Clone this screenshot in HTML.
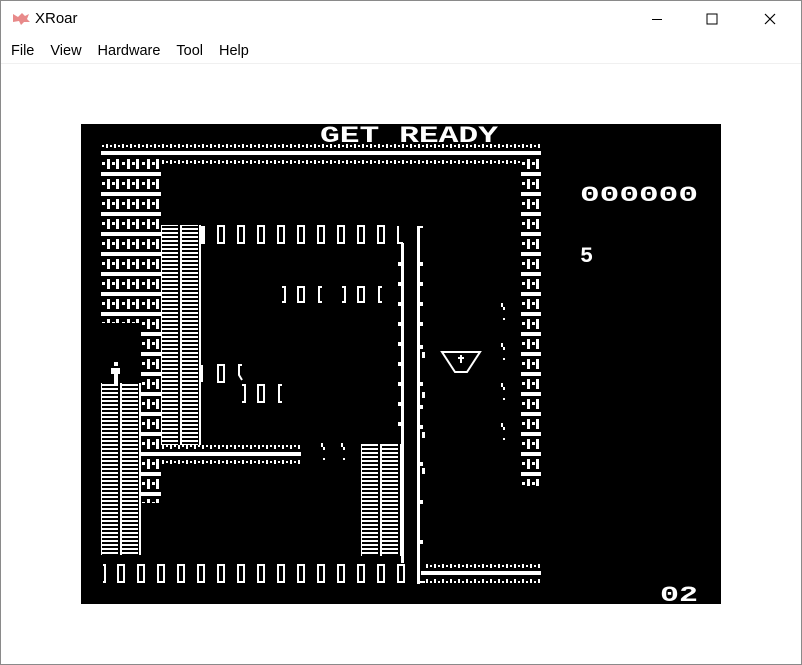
<!DOCTYPE html>
<html><head><meta charset="utf-8"><style>
html,body{margin:0;padding:0;background:#fff;width:802px;height:665px;overflow:hidden;font-family:"Liberation Sans",sans-serif}
.win{position:absolute;left:0;top:0;width:800px;height:663px;border:1px solid #8a8a8a;background:#fff}
.title{position:absolute;left:34px;top:9px;font-size:15px;color:#000}
.menu{position:absolute;top:42px;left:10px;font-size:14.5px;color:#000}
.menu span{margin-right:16px}
.sep{position:absolute;left:0;top:62px;width:800px;height:1px;background:#f0f0f0}
svg{position:absolute;left:0;top:0}
</style></head><body>
<div class="win">
<div class="title">XRoar</div>
<div class="menu"><span>File</span><span>View</span><span>Hardware</span><span>Tool</span><span>Help</span></div>
<div class="sep"></div>
</div>
<svg width="802" height="665" viewBox="0 0 802 665">
<defs>
<pattern id="wall" patternUnits="userSpaceOnUse" x="101" y="172" width="20" height="20">
<rect x="0" y="0" width="20" height="4" fill="#fff"/>
<rect x="1" y="10" width="3" height="3" fill="#fff"/>
<rect x="6" y="7" width="3" height="10" fill="#fff"/>
<rect x="11" y="10" width="3" height="3" fill="#fff"/>
<rect x="15" y="7" width="3" height="10" fill="#fff"/>
</pattern>
<pattern id="wallr" patternUnits="userSpaceOnUse" x="521" y="172" width="20" height="20">
<rect x="0" y="0" width="20" height="4" fill="#fff"/>
<rect x="1" y="10" width="3" height="3" fill="#fff"/>
<rect x="6" y="7" width="3" height="10" fill="#fff"/>
<rect x="11" y="10" width="3" height="3" fill="#fff"/>
<rect x="15" y="7" width="3" height="10" fill="#fff"/>
</pattern>
<pattern id="dots" patternUnits="userSpaceOnUse" x="101" y="0" width="8" height="4">
<rect x="1" y="1" width="2" height="2" fill="#fff"/><rect x="5" y="0" width="2" height="4" fill="#fff"/>
</pattern>
<pattern id="rungs" patternUnits="userSpaceOnUse" x="0" y="0" width="20" height="4">
<rect x="2" y="0" width="16" height="2" fill="#fff"/>
<rect x="0" y="0" width="2" height="4" fill="#fff"/>
</pattern>
</defs>
<path d="M13 14 l5 3 l4 -4 l3 3 l4 -2 l-2 5 l3 3 l-6 0 l-3 3 l-2 -4 l-6 1 z" fill="#e88a8a"/>
<rect x="652" y="19" width="10" height="1" fill="#000"/>
<rect x="707" y="14" width="10" height="10" fill="none" stroke="#000" stroke-width="1"/>
<path d="M765 14 L775 24 M775 14 L765 24" stroke="#000" stroke-width="1.2"/>
<rect x="81" y="124" width="640" height="480" fill="#000"/>
<text x="320" y="142" font-family="Liberation Mono,monospace" font-weight="bold" font-size="23" fill="#fff" textLength="178" lengthAdjust="spacingAndGlyphs">GET READY</text>
<text x="580" y="201" font-family="Liberation Mono,monospace" font-weight="bold" font-size="22" fill="#fff" textLength="118" lengthAdjust="spacingAndGlyphs">000000</text>
<text x="580" y="262" font-family="Liberation Mono,monospace" font-weight="bold" font-size="22" fill="#fff">5</text>
<text x="660" y="601" font-family="Liberation Mono,monospace" font-weight="bold" font-size="22" fill="#fff" textLength="38" lengthAdjust="spacingAndGlyphs">02</text>
<rect x="101" y="144" width="440" height="4" fill="url(#dots)"/>
<rect x="101" y="151" width="440" height="4" fill="#fff"/>
<rect x="161" y="160" width="360" height="4" fill="url(#dots)"/>
<rect x="101" y="158" width="60" height="165" fill="url(#wall)"/>
<rect x="141" y="323" width="20" height="180" fill="url(#wall)"/>
<rect x="521" y="158" width="20" height="328" fill="url(#wallr)"/>
<rect x="161" y="225" width="40" height="220" fill="url(#rungs)"/>
<rect x="199" y="225" width="2" height="220" fill="#fff"/>
<rect x="101" y="383" width="40" height="172" fill="url(#rungs)"/>
<rect x="139" y="383" width="2" height="172" fill="#fff"/>
<rect x="361" y="444" width="40" height="112" fill="url(#rungs)"/>
<rect x="114" y="362" width="4" height="4" fill="#fff"/><rect x="111" y="368" width="9" height="6" fill="#fff"/><rect x="114" y="374" width="4" height="10" fill="#fff"/>
<g fill="none" stroke="#fff" stroke-width="2">
<path d="M202 226v17h2v-17"/>
<rect x="218" y="226" width="6" height="17"/><rect x="238" y="226" width="6" height="17"/><rect x="258" y="226" width="6" height="17"/><rect x="278" y="226" width="6" height="17"/><rect x="298" y="226" width="6" height="17"/><rect x="318" y="226" width="6" height="17"/><rect x="338" y="226" width="6" height="17"/><rect x="358" y="226" width="6" height="17"/><rect x="378" y="226" width="6" height="17"/>
<path d="M398 226v17h5"/>
<path d="M282 287h3v15h-3"/><rect x="298" y="287" width="6" height="15"/><path d="M322 287h-3v15h3"/>
<path d="M342 287h3v15h-3"/><rect x="358" y="287" width="6" height="15"/><path d="M382 287h-3v15h3"/>
<path d="M202 365v17"/><rect x="218" y="365" width="6" height="17"/><path d="M242 365h-3v10l3 5"/>
<path d="M242 385h3v17h-3"/><rect x="258" y="385" width="6" height="17"/><path d="M282 385h-3v17h3"/>
<path d="M103 565h2v17h-2"/>
<rect x="118" y="565" width="6" height="17"/><rect x="138" y="565" width="6" height="17"/><rect x="158" y="565" width="6" height="17"/><rect x="178" y="565" width="6" height="17"/><rect x="198" y="565" width="6" height="17"/><rect x="218" y="565" width="6" height="17"/><rect x="238" y="565" width="6" height="17"/><rect x="258" y="565" width="6" height="17"/><rect x="278" y="565" width="6" height="17"/><rect x="298" y="565" width="6" height="17"/><rect x="318" y="565" width="6" height="17"/><rect x="338" y="565" width="6" height="17"/><rect x="358" y="565" width="6" height="17"/><rect x="378" y="565" width="6" height="17"/><rect x="398" y="565" width="6" height="17"/>
<path d="M442 352h38l-13 20h-12z"/>
<path d="M461 355v8M458 358h6"/>
</g>
<rect x="401" y="243" width="3" height="320" fill="#fff"/>
<rect x="417" y="226" width="3" height="358" fill="#fff"/>
<rect x="417" y="581" width="8" height="2" fill="#fff"/>
<rect x="419" y="226" width="4" height="2" fill="#fff"/>
<g fill="#fff">
<rect x="398" y="262" width="3" height="4"/><rect x="398" y="282" width="3" height="4"/><rect x="398" y="302" width="3" height="4"/><rect x="398" y="322" width="3" height="4"/><rect x="398" y="342" width="3" height="4"/><rect x="398" y="362" width="3" height="4"/><rect x="398" y="382" width="3" height="4"/><rect x="398" y="402" width="3" height="4"/><rect x="398" y="422" width="3" height="4"/>
<rect x="420" y="262" width="3" height="4"/><rect x="420" y="282" width="3" height="4"/><rect x="420" y="302" width="3" height="4"/><rect x="420" y="322" width="3" height="4"/><rect x="420" y="345" width="3" height="4"/><rect x="420" y="382" width="3" height="4"/><rect x="420" y="405" width="3" height="4"/><rect x="420" y="425" width="3" height="4"/><rect x="420" y="462" width="3" height="4"/><rect x="420" y="500" width="3" height="4"/><rect x="420" y="540" width="3" height="4"/>
<rect x="422" y="352" width="3" height="6"/><rect x="422" y="392" width="3" height="6"/><rect x="422" y="432" width="3" height="6"/><rect x="422" y="468" width="3" height="6"/>
<rect x="501" y="303" width="2" height="4"/><rect x="503" y="307" width="2" height="3"/><rect x="503" y="318" width="2" height="2"/>
<rect x="501" y="343" width="2" height="4"/><rect x="503" y="347" width="2" height="3"/><rect x="503" y="358" width="2" height="2"/>
<rect x="501" y="383" width="2" height="4"/><rect x="503" y="387" width="2" height="3"/><rect x="503" y="398" width="2" height="2"/>
<rect x="501" y="423" width="2" height="4"/><rect x="503" y="427" width="2" height="3"/><rect x="503" y="438" width="2" height="2"/>
<rect x="321" y="443" width="2" height="4"/><rect x="323" y="447" width="2" height="3"/><rect x="323" y="458" width="2" height="2"/>
<rect x="341" y="443" width="2" height="4"/><rect x="343" y="447" width="2" height="3"/><rect x="343" y="458" width="2" height="2"/>
</g>
<rect x="161" y="445" width="141" height="4" fill="url(#dots)"/>
<rect x="141" y="452" width="160" height="4" fill="#fff"/>
<rect x="161" y="460" width="141" height="4" fill="url(#dots)"/>
<rect x="425" y="564" width="115" height="4" fill="url(#dots)"/>
<rect x="421" y="571" width="120" height="4" fill="#fff"/>
<rect x="425" y="579" width="115" height="4" fill="url(#dots)"/>
</svg>
</body></html>
